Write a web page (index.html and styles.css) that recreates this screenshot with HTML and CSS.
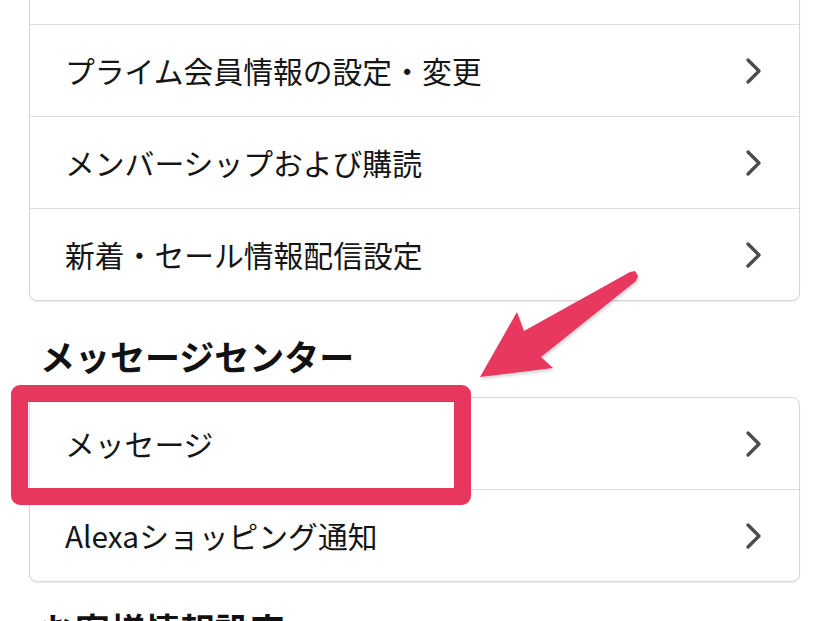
FILE: index.html
```html
<!DOCTYPE html>
<html lang="ja">
<head>
<meta charset="utf-8">
<title>アカウント設定</title>
<link rel="stylesheet" href="styles.css">
</head>
<body>
<div class="page">
  <div class="card card-first">
    <div class="row"><span class="label">Amazonプライム会員情報</span><svg class="chev" viewBox="0 0 18 28"><polyline points="3,3 14,14 3,25"/></svg></div>
    <div class="row"><span class="label">プライム会員情報の設定・変更</span><svg class="chev" viewBox="0 0 18 28"><polyline points="3,3 14,14 3,25"/></svg></div>
    <div class="row"><span class="label">メンバーシップおよび購読</span><svg class="chev" viewBox="0 0 18 28"><polyline points="3,3 14,14 3,25"/></svg></div>
    <div class="row"><span class="label">新着・セール情報配信設定</span><svg class="chev" viewBox="0 0 18 28"><polyline points="3,3 14,14 3,25"/></svg></div>
  </div>

  <h2 class="section-title">メッセージセンター</h2>

  <div class="card">
    <div class="row"><span class="label">メッセージ</span><svg class="chev" viewBox="0 0 18 28"><polyline points="3,3 14,14 3,25"/></svg></div>
    <div class="row"><span class="label">Alexaショッピング通知</span><svg class="chev" viewBox="0 0 18 28"><polyline points="3,3 14,14 3,25"/></svg></div>
  </div>

  <h2 class="section-title section-next">お客様情報設定</h2>

  <div class="highlight"></div>
  <svg class="arrow" viewBox="0 0 828 621" width="828" height="621">
    <defs>
      <filter id="sh" x="-10%" y="-10%" width="130%" height="130%">
        <feDropShadow dx="1" dy="2" stdDeviation="1.5" flood-color="#000" flood-opacity="0.18"/>
      </filter>
    </defs>
    <polygon filter="url(#sh)" points="480,377 517,312 524,331 630,272 635,271 638,276 636,281 541,357 553,368"/>
  </svg>
</div>
</body>
</html>
```

FILE: styles.css
```css
html, body {
  margin: 0;
  padding: 0;
  background: #ffffff;
}

body {
  font-family: "Noto Sans CJK JP", "Noto Sans", sans-serif;
  color: #111111;
  overflow: hidden;
  height: 621px;
}

.page {
  position: relative;
  display: flow-root;
  padding: 0 28px 0 29px;
}

.card {
  border: 1px solid #d6d6d6;
  border-radius: 8px;
  background: #ffffff;
  box-shadow: 0 1px 1px rgba(0, 0, 0, 0.08);
}

.card-first {
  margin-top: -68px;
}

.row {
  height: 91px;
  display: flex;
  align-items: center;
  justify-content: space-between;
  padding: 0 36px 0 35px;
  border-bottom: 1px solid #dedede;
}

.row:last-child {
  border-bottom: none;
}

.label {
  font-size: 29.8px;
  font-weight: 400;
  letter-spacing: 0;
  line-height: 1;
  color: #151515;
}

.chev {
  width: 18px;
  height: 28px;
  flex: none;
}

.chev polyline {
  fill: none;
  stroke: #4d4d4d;
  stroke-width: 3.4;
  stroke-linecap: round;
  stroke-linejoin: round;
}

.section-title {
  margin: 35px 0 21px 11px;
  height: 40px;
  font-size: 35px;
  line-height: 40px;
  font-weight: 700;
  color: #111111;
}

.section-next {
  margin-top: 27px;
}

.highlight {
  position: absolute;
  left: 11px;
  top: 385px;
  width: 426px;
  height: 86px;
  border: 17px solid #e8375e;
  border-radius: 9px;
}

.arrow {
  position: absolute;
  left: 0;
  top: 0;
  pointer-events: none;
}

.arrow polygon {
  fill: #e8375e;
}
```
